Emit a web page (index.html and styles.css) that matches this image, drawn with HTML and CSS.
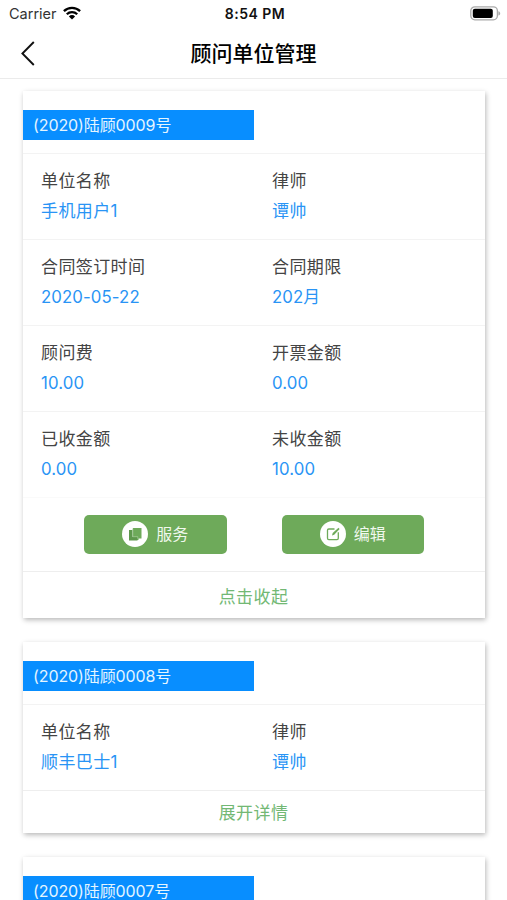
FILE: index.html
```html
<!DOCTYPE html>
<html lang="zh-CN">
<head>
<meta charset="utf-8">
<title>顾问单位管理</title>
<link rel="stylesheet" href="styles.css">
</head>
<body>
<div class="status">
  <div class="carrier"><span>Carrier</span>
    <svg width="18" height="14" viewBox="0 0 18 14"><g fill="none" stroke="#000" stroke-width="2.3"><path d="M.9 5.1a11.6 11.6 0 0 1 16.2 0"/><path d="M3.8 8.2a7.4 7.4 0 0 1 10.4 0"/></g><path d="M5.9 10.4a4.4 4.4 0 0 1 6.2 0L9 13.6z"/></svg>
  </div>
  <div class="time">8:54 PM</div>
  <svg class="battery" width="31" height="15" viewBox="0 0 31 15"><rect x=".8" y=".8" width="26.6" height="13" rx="4" fill="#fff" stroke="#aaa" stroke-width="1.3"/><rect x="2.8" y="2.7" width="20" height="9.2" rx="2"/><path d="M28.4 5.2c2.4.7 2.4 3.7 0 4.4z" fill="#aaa"/></svg>
</div>
<header class="nav">
  <svg class="back" width="14" height="25" viewBox="0 0 14 25"><path d="M12.8 1 1.4 12.5 12.8 24" fill="none" stroke="#111" stroke-width="1.9"/></svg>
  <h1>顾问单位管理</h1>
</header>
<main>
  <section class="card">
    <div class="head"><div class="tag">(2020)陆顾0009号</div></div>
    <div class="row"><div><p>单位名称</p><b>手机用户1</b></div><div><p>律师</p><b>谭帅</b></div></div>
    <div class="row"><div><p>合同签订时间</p><b class="num">2020-05-22</b></div><div><p>合同期限</p><b class="num">202月</b></div></div>
    <div class="row"><div><p>顾问费</p><b class="num">10.00</b></div><div><p>开票金额</p><b class="num">0.00</b></div></div>
    <div class="row"><div><p>已收金额</p><b class="num">0.00</b></div><div><p>未收金额</p><b class="num">10.00</b></div></div>
    <div class="actions">
      <div class="btn"><svg width="26" height="26" viewBox="0 0 26 26"><circle cx="13" cy="13" r="13" fill="#fff"/><path d="M11 7h8.5v10.5h-3V19H10.5z" fill="#6eaa5a"/><path d="M7 9h3.5v7h5v3.5H7z" fill="#5e984d"/><path d="M10.8 7.5v8.2h5v2" fill="none" stroke="#a5cb99" stroke-width=".7"/></svg><span>服务</span></div>
      <div class="btn"><svg width="26" height="26" viewBox="0 0 26 26"><circle cx="13" cy="13" r="13" fill="#fff"/><path d="M14.5 8H8.8Q7.5 8 7.5 9.3v8Q7.5 18.6 8.8 18.6h8.2q1.3 0 1.3-1.3v-6" fill="none" stroke="#6eaa5a" stroke-width="1.3"/><path d="m12 14.5.7-2.4 5.8-5.3 1.1 1.1-5.4 5.8z" fill="#6eaa5a"/></svg><span>编辑</span></div>
    </div>
    <div class="more">点击收起</div>
  </section>
  <section class="card short">
    <div class="head"><div class="tag">(2020)陆顾0008号</div></div>
    <div class="row"><div><p>单位名称</p><b>顺丰巴士1</b></div><div><p>律师</p><b>谭帅</b></div></div>
    <div class="more">展开详情</div>
  </section>
  <section class="card">
    <div class="head"><div class="tag">(2020)陆顾0007号</div></div>
  </section>
</main>
</body>
</html>
```
FILE: styles.css
```css
* { box-sizing: border-box; margin: 0; padding: 0; }
body {
  height: 900px;
  overflow: hidden;
  background: #fff;
  font: 16px "Inter", "Noto Sans CJK SC", sans-serif;
  color: #444;
}
.status {
  height: 28px;
  display: grid;
  grid-template-columns: 1fr auto 1fr;
  align-items: center;
  padding: 0 6px 1px 9px;
  color: #111;
}
.carrier { display: flex; align-items: center; gap: 6px; font-size: 14.5px; color: #333; }
.carrier svg { margin-top: -2px; }
.time { font-size: 14px; font-weight: 600; letter-spacing: 0.5px; }
.battery { justify-self: end; }
.nav {
  height: 51px;
  display: grid;
  grid-template-columns: 60px 1fr 60px;
  align-items: center;
  border-bottom: 1px solid #ebebeb;
}
.back { margin-left: 21px; }
.nav h1 {
  padding-top: 1px;
  font-size: 21px;
  line-height: 30px;
  font-weight: 500;
  text-align: center;
  color: #000;
}
main { padding: 12px 22px 0 23px; }
.card {
  background: #fff;
  margin-bottom: 24px;
  box-shadow: 1px 2px 5px rgba(0, 0, 0, 0.28);
}
.head { height: 62px; padding-top: 19px; }
.tag {
  width: 231px;
  height: 30px;
  line-height: 30px;
  padding-left: 10px;
  font-size: 16px;
  letter-spacing: -0.1px;
  background: #088eff;
  color: #e4f5ff;
}
.row {
  display: grid;
  grid-template-columns: 1fr 1fr;
  align-content: start;
  height: 86px;
  padding-top: 12px;
  border-top: 1px solid #f3f3f3;
}
.row > div { padding-left: 18px; }
.row p, .row b {
  display: block;
  font-size: 17px;
  line-height: 30px;
  letter-spacing: 0.4px;
}
.row b { font-weight: 400; color: #2994f5; }
.row .num { font-size: 16.8px; letter-spacing: 0.1px; }
.actions {
  display: flex;
  gap: 55px;
  height: 74px;
  padding: 17px 0 0 61px;
  border-top: 1px solid #fafafa;
}
.btn {
  width: 142.5px;
  height: 38.5px;
  display: flex;
  align-items: center;
  justify-content: center;
  gap: 8px;
  border-radius: 5px;
  background: #6eaa5a;
  color: #f0f8ed;
}
.btn svg { margin-top: -1px; }
.btn span { margin-top: -2px; }
.more {
  height: 47px;
  line-height: 50px;
  border-top: 1px solid #eee;
  padding-right: 1px;
  text-align: center;
  font-size: 17px;
  letter-spacing: 0.4px;
  color: #72b874;
}
.short .row { height: 86px; }
.short .more { height: 43px; line-height: 44px; }
```
